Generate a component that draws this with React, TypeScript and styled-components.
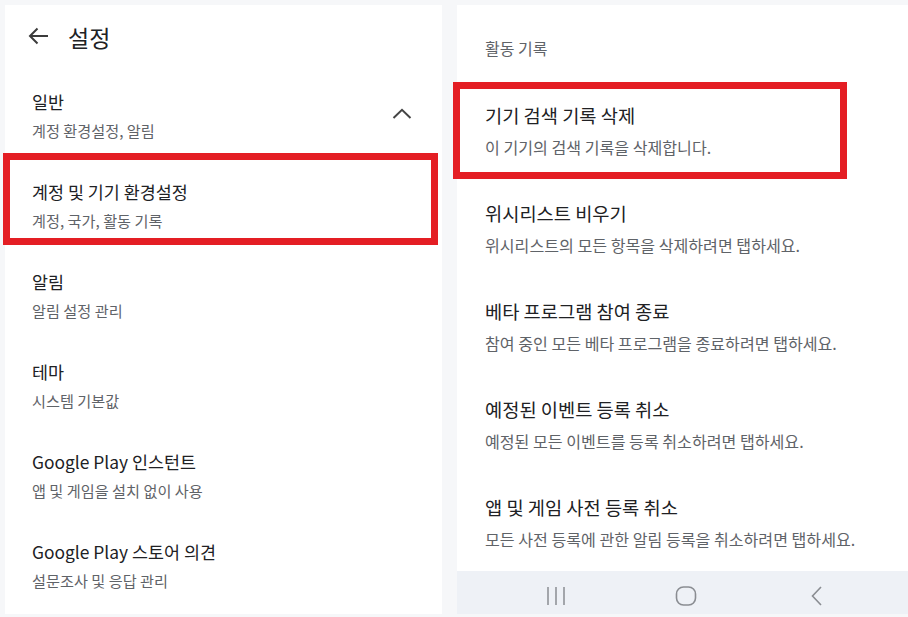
import React from 'react';
import styled, { createGlobalStyle } from 'styled-components';

const GlobalStyle = createGlobalStyle`
  body {
    margin: 0;
    background: #f6f7f9;
    font-family: 'Noto Sans CJK KR', 'Noto Sans', sans-serif;
    -webkit-font-smoothing: antialiased;
  }
`;

const leftItems = [
  { title: '계정 및 기기 환경설정', sub: '계정, 국가, 활동 기록', mark: true },
  { title: '알림', sub: '알림 설정 관리' },
  { title: '테마', sub: '시스템 기본값' },
  { title: 'Google Play 인스턴트', sub: '앱 및 게임을 설치 없이 사용' },
  { title: 'Google Play 스토어 의견', sub: '설문조사 및 응답 관리' },
];

const rightItems = [
  { title: '기기 검색 기록 삭제', sub: '이 기기의 검색 기록을 삭제합니다.', mark: true },
  { title: '위시리스트 비우기', sub: '위시리스트의 모든 항목을 삭제하려면 탭하세요.' },
  { title: '베타 프로그램 참여 종료', sub: '참여 중인 모든 베타 프로그램을 종료하려면 탭하세요.' },
  { title: '예정된 이벤트 등록 취소', sub: '예정된 모든 이벤트를 등록 취소하려면 탭하세요.' },
  { title: '앱 및 게임 사전 등록 취소', sub: '모든 사전 등록에 관한 알림 등록을 취소하려면 탭하세요.' },
];

const App: React.FC = () => {
  return (
    <>
      <GlobalStyle />
      <Page>
        <LeftPanel>
          <Header>
            <svg width="21" height="18" viewBox="0 0 21 18" fill="none" stroke="#3c3c3c" strokeWidth="2">
              <path d="M20 9H2.5" />
              <path d="M9.5 1.5L2 9l7.5 7.5" />
            </svg>
            <PageTitle>설정</PageTitle>
          </Header>
          <LeftRow>
            <TextBlock>
              <LeftTitle>일반</LeftTitle>
              <LeftSub>계정 환경설정, 알림</LeftSub>
            </TextBlock>
            <svg width="20" height="11" viewBox="0 0 20 11" fill="none" stroke="#444" strokeWidth="2">
              <path d="M1.5 10L10 1.8 18.5 10" />
            </svg>
          </LeftRow>
          {leftItems.map((it) => (
            <LeftRow key={it.title} $mark={it.mark}>
              <TextBlock>
                <LeftTitle>{it.title}</LeftTitle>
                <LeftSub>{it.sub}</LeftSub>
              </TextBlock>
            </LeftRow>
          ))}
        </LeftPanel>
        <RightPanel>
          <Content>
            <Section>활동 기록</Section>
            {rightItems.map((it) => (
              <RightRow key={it.title} $mark={it.mark}>
                <RightTitle>{it.title}</RightTitle>
                <RightSub>{it.sub}</RightSub>
              </RightRow>
            ))}
          </Content>
          <NavBar>
            <NavButton>
              <svg width="20" height="20" viewBox="0 0 20 20" fill="none" stroke="#8a8d92" strokeWidth="1.5">
                <path d="M2 1v18M10 1v18M18 1v18" />
              </svg>
            </NavButton>
            <NavButton>
              <svg width="22" height="20" viewBox="0 0 22 20" fill="none" stroke="#8a8d92" strokeWidth="1.6">
                <rect x="1.5" y="1" width="19" height="18" rx="7" />
              </svg>
            </NavButton>
            <NavButton>
              <svg width="11" height="20" viewBox="0 0 11 20" fill="none" stroke="#8a8d92" strokeWidth="1.6">
                <path d="M10 1L1.5 10 10 19" />
              </svg>
            </NavButton>
          </NavBar>
        </RightPanel>
      </Page>
    </>
  );
};

const Page = styled.div`
  display: flex;
  gap: 15px;
  height: 617px;
  padding: 5px 0 3px 5px;
  box-sizing: border-box;
`;

const LeftPanel = styled.div`
  width: 437px;
  background: #fff;
  display: flex;
  flex-direction: column;
`;

const Header = styled.div`
  height: 65px;
  display: flex;
  align-items: center;
  gap: 19px;
  padding: 0 0 0 23px;
  box-sizing: border-box;
  svg {
    margin-top: -4px;
  }
`;

const PageTitle = styled.div`
  font-size: 23px;
  color: #202124;
  margin-top: -2px;
`;

const LeftRow = styled.div<{ $mark?: boolean }>`
  position: relative;
  height: 90px;
  display: flex;
  align-items: center;
  justify-content: space-between;
  padding: 0 30px 0 27px;
  box-sizing: border-box;
  svg {
    margin-top: -4px;
  }
  ${(p) =>
    p.$mark &&
    `
    &::after {
      content: '';
      position: absolute;
      top: -7px;
      bottom: 5px;
      left: -2px;
      right: 4px;
      border: 7px solid #e41e24;
    }
  `}
`;

const TextBlock = styled.div`
  display: flex;
  flex-direction: column;
  gap: 6px;
`;

const LeftTitle = styled.div`
  font-size: 17.4px;
  line-height: 24px;
  color: #202124;
`;

const LeftSub = styled.div`
  font-size: 15.2px;
  line-height: 20px;
  color: #5f6368;
`;

const RightPanel = styled.div`
  flex: 1;
  background: #fff;
  display: flex;
  flex-direction: column;
`;

const Content = styled.div`
  flex: 1;
  padding: 0 0 0 28px;
`;

const Section = styled.div`
  padding: 32px 0 22px;
  font-size: 16px;
  line-height: 22px;
  color: #5f6368;
`;

const RightRow = styled.div<{ $mark?: boolean }>`
  position: relative;
  height: 98px;
  display: flex;
  flex-direction: column;
  justify-content: center;
  gap: 8px;
  ${(p) =>
    p.$mark &&
    `
    &::after {
      content: '';
      position: absolute;
      top: 1px;
      bottom: 0;
      left: -32px;
      right: 61px;
      border: 7px solid #e41e24;
    }
  `}
`;

const RightTitle = styled.div`
  font-size: 18.7px;
  line-height: 26px;
  color: #202124;
`;

const RightSub = styled.div`
  font-size: 16.1px;
  line-height: 22px;
  color: #5f6368;
`;

const NavBar = styled.div`
  height: 44px;
  background: #eef1f6;
  display: flex;
  align-items: center;
  justify-content: center;
  gap: 90px;
  padding: 6px 0 0 7px;
  box-sizing: border-box;
`;

const NavButton = styled.div`
  width: 40px;
  display: flex;
  justify-content: center;
`;

export default App;
